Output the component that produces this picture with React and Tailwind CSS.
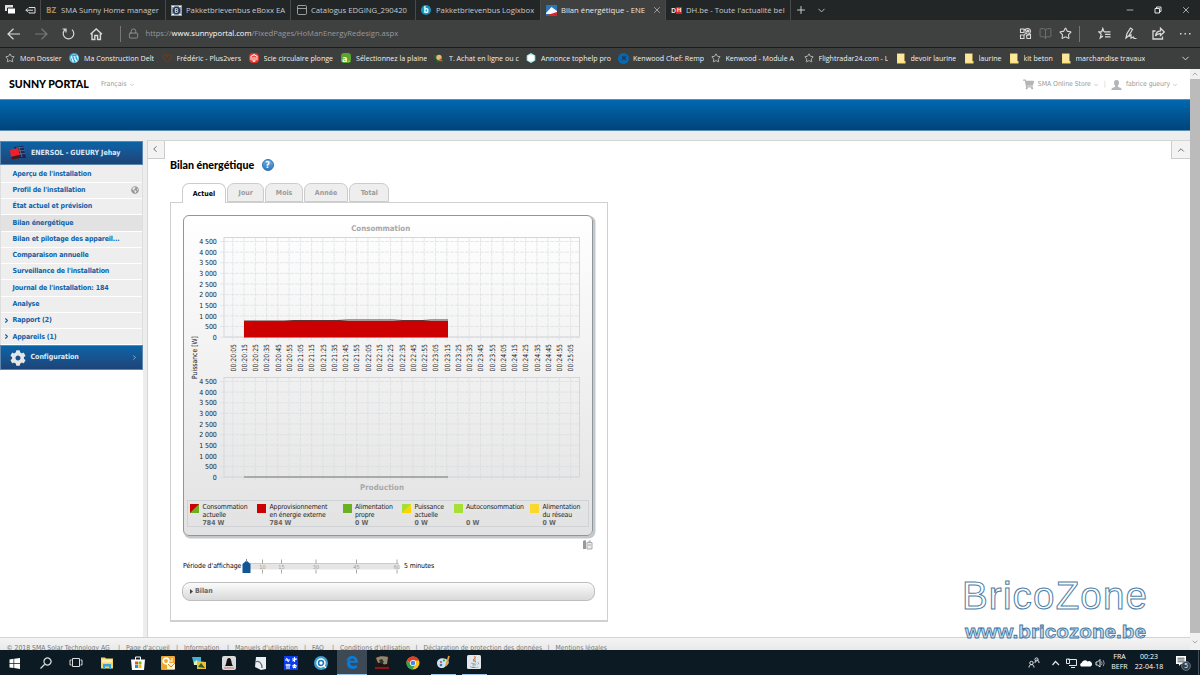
import {
  BookOpen,
  ChevronDown,
  ChevronLeft,
  ChevronRight,
  ChevronUp,
  Lock,
  Minus,
  PanelTop,
  Plus,
  Star,
  X,
} from "lucide-react";
import { FaWordpressSimple, FaMagento, FaShoppingCart, FaGlobeAmericas, FaJava, FaCog } from "react-icons/fa";

const uiFont = "font-['Open_Sans','Noto_Sans',sans-serif]";
const portalFont = "font-['DejaVu_Sans_Condensed','DejaVu_Sans',sans-serif]";

const browserTabs = [
  { icon: <span className="text-[8px] font-bold text-[#b08a55]">BZ</span>, title: "SMA Sunny Home manager", width: "w-[125px]" },
  { icon: <EboxxIcon />, title: "Pakketbrievenbus eBoxx EA", width: "w-[125px]" },
  { icon: <PanelTop size={12} strokeWidth={1.8} className="text-[#aaa]" />, title: "Catalogus EDGING_290420", width: "w-[125px]" },
  { icon: <span className="flex size-[10px] items-center justify-center rounded-full bg-[#1593bd] text-[8px] font-bold leading-none text-white">b</span>, title: "Pakketbrievenbus Logixbox", width: "w-[125px]" },
  { icon: <SmaIcon />, title: "Bilan énergétique - ENE", width: "w-[125px]", active: true },
  { icon: <DhIcon />, title: "DH.be - Toute l'actualité bel", width: "w-[125px]" },
];

const folder = (
  <svg width="10" height="11" viewBox="0 0 10 11">
    <path d="M1 .5h7.5v7.500H9.500v2.500H1z" fill="#fbd969" />
    <path d="M1.500 1h6.500v8.500H1.500z" fill="#ffe79a" />
  </svg>
);

const star = <Star size={10} strokeWidth={1.8} className="text-[#d8d8d8]" />;

const bookmarks = [
  { icon: star, title: "Mon Dossier", width: "w-[64px]" },
  { icon: <span className="flex size-[10px] items-center justify-center rounded-full bg-[#27a5d6]"><FaWordpressSimple size={9} className="text-white" /></span>, title: "Ma Construction Delt", width: "w-[92.5px]" },
  { icon: <svg width="10" height="10" viewBox="0 0 10 10" fill="none" stroke="#6b3a22" strokeWidth="1.2"><path d="M4 8C1 6 0 2 2.500 1.500S5 4 5 4s1-3 3.500-2S8 7 5.500 8.500" /></svg>, title: "Frédéric - Plus2vers", width: "w-[87px]" },
  { icon: <span className="flex size-[10px] items-center justify-center rounded-[4px] bg-[#e3382c]"><FaMagento size={8} className="text-white" /></span>, title: "Scie circulaire plonge", width: "w-[92.500px]" },
  { icon: <span className="flex size-[10px] items-center justify-center rounded-[3px] bg-[#5aa52b] text-[9px] font-bold leading-none text-white">a<i className="not-italic text-[#f3c136]">.</i></span>, title: "Sélectionnez la plaine", width: "w-[93px]" },
  { icon: <svg width="10" height="10" viewBox="0 0 10 10"><path d="M0 2h4v4H1zM2 7h7v2H3z" fill="#1d6a2b" /><circle cx="5" cy="4.500" r="2.700" fill="#e8b878" /><path d="M6 5l2.500 3H5z" fill="#c8632b" /></svg>, title: "T. Achat en ligne ou c", width: "w-[92px]" },
  { icon: <svg width="10" height="10" viewBox="0 0 10 10"><path d="M5 0l4.300 2.500v5L5 10 .7 7.500v-5z" fill="#a9ebe8" /><circle cx="5" cy="5" r="3.300" fill="#fff" /></svg>, title: "Annonce tophelp pro", width: "w-[92px]" },
  { icon: <span className="flex size-[11px] items-center justify-center rounded-full bg-[#0a66ad]"><X size={6} strokeWidth={5} className="text-[#22384c]" /></span>, title: "Kenwood Chef: Remp", width: "w-[92.500px]" },
  { icon: star, title: "Kenwood - Module A", width: "w-[93px]" },
  { icon: star, title: "Flightradar24.com - L", width: "w-[92px]" },
  { icon: folder, title: "devoir laurine", width: "w-[68px]" },
  { icon: folder, title: "laurine", width: "w-[45px]" },
  { icon: folder, title: "kit beton", width: "w-[52px]" },
  { icon: folder, title: "marchandise travaux", width: "w-[95px]" },
];

const menu = [
  { label: "Aperçu de l'installation" },
  { label: "Profil de l'installation", globe: true },
  { label: "État actuel et prévision" },
  { label: "Bilan énergétique", active: true },
  { label: "Bilan et pilotage des appareil..." },
  { label: "Comparaison annuelle" },
  { label: "Surveillance de l'installation" },
  { label: "Journal de l'installation: 184" },
  { label: "Analyse" },
  { label: "Rapport (2)", expandable: true },
  { label: "Appareils (1)", expandable: true },
];

const periodTabs = [
  { label: "Actuel", width: "w-[44px]", active: true },
  { label: "Jour", width: "w-[37px]" },
  { label: "Mois", width: "w-[37.500px]" },
  { label: "Année", width: "w-[44px]" },
  { label: "Total", width: "w-[40px]" },
];

const legend = [
  { lines: ["Consommation", "actuelle"], value: "784 W", a: "#cc0000", b: "#6ab023", width: "w-[67px]" },
  { lines: ["Approvisionnement", "en énergie externe"], value: "784 W", a: "#cc0000", b: "#cc0000", width: "w-[85.500px]" },
  { lines: ["Alimentation", "propre"], value: "0 W", a: "#6ab023", b: "#6ab023", width: "w-[59.500px]" },
  { lines: ["Puissance", "actuelle"], value: "0 W", a: "#a6e036", b: "#ffd500", width: "w-[51.500px]" },
  { lines: ["Autoconsommation", "\u00a0"], value: "0 W", a: "#a6e036", b: "#a6e036", width: "w-[76.500px]" },
  { lines: ["Alimentation", "du réseau"], value: "0 W", a: "#fdd82c", b: "#fdd82c", width: "w-[56px]" },
];

const footerLinks = [
  { label: "© 2018 SMA Solar Technology AG", width: "w-[111.500px]" },
  { label: "Page d'accueil", width: "w-[50px]" },
  { label: "Information", width: "w-[43px]" },
  { label: "Manuels d'utilisation", width: "w-[69px]" },
  { label: "FAQ", width: "w-[20px]" },
  { label: "Conditions d'utilisation", width: "w-[75.500px]" },
  { label: "Déclaration de protection des données", width: "w-[124px]" },
  { label: "Mentions légales", width: "w-[60px]" },
];

const levels = ["4 500", "4 000", "3 500", "3 000", "2 500", "2 000", "1 500", "1 000", "500", "0"];

const times = Array.from({ length: 31 }, (_, i) => {
  const seconds = 20 * 60 + 5 + i * 10;
  const pad = (n) => String(n).padStart(2, "0");
  return `00:${pad(Math.floor(seconds / 60))}:${pad(seconds % 60)}`;
});

function EboxxIcon() {
  return (
    <svg width="11" height="11" viewBox="0 0 11 11">
      <rect width="11" height="11" fill="#8fa0b4" />
      <path d="M1 1h2v1H1zM8 1h2v1H8zM1 9h2v1H1zM8 9h2v1H8z" fill="#fff" />
      <circle cx="5.500" cy="5.500" r="3.800" fill="#27384e" />
      <path d="M4.300 3.500v4h1.500a1 1 0 0 0 0-2 1 1 0 0 0 0-2zM4.300 5.500h1.500" fill="none" stroke="#dfe6ee" strokeWidth=".9" />
    </svg>
  );
}

function SmaIcon() {
  return (
    <svg width="11" height="11" viewBox="0 0 11 11">
      <rect width="11" height="11" fill="#2876b6" />
      <path d="M0 8L5.500 2 11 6v3H0z" fill="#f4f7fa" />
      <path d="M0 10.500L11 7v4H0z" fill="#d8232a" />
    </svg>
  );
}

function DhIcon() {
  return (
    <span className="flex h-[8px] w-[11px] items-center text-[7px] font-bold leading-none text-white">
      <span className="w-[5px] text-[#ddd]">D</span>
      <span className="flex h-[7px] w-[6px] items-center justify-center bg-[#d3222b] text-[6px]">H</span>
    </span>
  );
}

function TabBar() {
  return (
    <div className="flex h-[20px] shrink-0 bg-[#232627] text-[#c9c9c9]">
      <div className="flex w-[40px] items-center gap-[9px] pl-[5px]">
        <svg width="11" height="10" viewBox="0 0 11 10">
          <path d="M0 0h8v6H0z" fill="#ddd" />
          <path d="M2.500 3h8v6h-8z" fill="#fff" stroke="#232627" />
        </svg>
        <svg width="11" height="9" viewBox="0 0 11 9" fill="none" stroke="#ddd">
          <path d="M4 2V1.500h6v5.500H4V6M8 4.200H.8M2.800 2.400L1 4.200 2.800 6" />
        </svg>
      </div>
      {browserTabs.map((tab) => (
        <div
          key={tab.title}
          className={`flex shrink-0 items-center border-l border-[#4a4a4a] pr-[3px] pl-[5px] ${tab.width} ${tab.active ? "bg-[#3f4040] text-[#e8e8e8]" : ""}`}
        >
          <span className="flex w-[15px] shrink-0 items-center">{tab.icon}</span>
          <span className="min-w-0 flex-1 overflow-hidden whitespace-nowrap text-[7.700px] leading-[14px]">{tab.title}</span>
          {tab.active ? <X size={10} strokeWidth={1.600} className="ml-[2px] shrink-0 text-[#ccc]" /> : null}
        </div>
      ))}
      <div className="flex flex-1 items-center border-l border-[#4a4a4a] pl-[4px]">
        <Plus size={12} strokeWidth={2} />
        <ChevronDown size={11} strokeWidth={2} className="ml-[9px]" />
        <div className="ml-auto flex items-center gap-[19px] pr-[9px]">
          <Minus size={10} strokeWidth={2} />
          <svg width="8" height="8" viewBox="0 0 8 8" fill="none" stroke="#e5e5e5">
            <path d="M1 2.500h4.500V7H1zM2.500 2.500V1H7v4.500H5.500" />
          </svg>
          <X size={10} strokeWidth={2} />
        </div>
      </div>
    </div>
  );
}

function AddressBar() {
  return (
    <div className="flex h-[28px] shrink-0 items-center border-b border-[#1c1c1c] bg-[#3f4040] pl-[7px] text-[#d8d8d8]">
      <svg width="98" height="14" viewBox="0 0 98 14" fill="none" stroke="currentColor" strokeWidth="1.200">
        <path d="M1 7h12M6.500 1.800L1 7l5.500 5.200" />
        <path d="M28 7h12M34.500 1.800L40 7l-5.500 5.200" stroke="#777" />
        <path d="M58.500 2.200A5.300 5.300 0 1 0 65 2.600M55.500 2h3.500v3.500" />
        <path d="M83.500 7.200L89.200 2 95 7.200M85 6v6.500h2.800V8.500h2.800v4h2.800V6" strokeWidth="1.400" />
      </svg>
      <span className="ml-[15px] h-[16px] w-px bg-[#777]" />
      <Lock size={11} strokeWidth={1.800} className="ml-[7px] text-[#999]" />
      <span className="ml-[6.500px] text-[7.650px] text-[#9a9a9a]">
        https://<b className="font-normal text-white">www.sunnyportal.com</b>/FixedPages/HoManEnergyRedesign.aspx
      </span>
      <div className="ml-auto flex items-center pr-[8px]">
        <svg width="13" height="13" viewBox="0 0 13 13" fill="none" stroke="#d8d8d8" strokeWidth="1.100">
          <path d="M1.500 2h3.500v3.500H1.500zM1.500 8h3.500v3.500H1.500zM5 8.500L8 4M4.500 3.500L7 2" />
          <path d="M6.500 4.500c-1-4 5-4 5 0 0 1.500-1.500 2.500-2.500 3l-2-1M7.500 8.500l4-1v4H8z" />
          <circle cx="9" cy="4" r="1" fill="#d8d8d8" />
        </svg>
        <BookOpen size={13} strokeWidth={1.600} className="ml-[7px] text-[#757575]" />
        <Star size={13} strokeWidth={2} className="ml-[7px]" />
        <span className="ml-[7px] h-[16px] w-px bg-[#777]" />
        <svg className="ml-[18px]" width="13" height="13" viewBox="0 0 13 13" fill="none" stroke="currentColor" strokeWidth="1.200">
          <path d="M6 4.800L4.800 1.500 3.700 4.800H.7l2.500 2.300-1 4 2.800-2M6 4.800h6.500M7 7.300h5.500M7 9.800h5.500" />
        </svg>
        <svg className="ml-[14px]" width="12" height="13" viewBox="0 0 12 13" fill="none" stroke="currentColor" strokeWidth="1.200">
          <path d="M1 11L2 6.500 5.500 1l2 1.500-3.500 6L1 11zM4 9.500l2-1.500v3l2.500-1 .5 1.500h2.500" />
        </svg>
        <svg className="ml-[15px]" width="13" height="13" viewBox="0 0 13 13" fill="none" stroke="currentColor" strokeWidth="1.300">
          <path d="M3.500 4H1v8h9.500V9.500M8.500 1.200L12.300 5 8.500 8.500V6.500C6 6.500 4.500 7.500 3.500 9c.3-3 2-5 5-5.200z" />
        </svg>
        <svg className="ml-[14px]" width="13" height="3" viewBox="0 0 13 3" fill="currentColor">
          <path d="M1 1h1.500v1.500H1zM5.500 1H7v1.500H5.500zM10 1h1.500v1.500H10z" />
        </svg>
      </div>
    </div>
  );
}

function BookmarksBar() {
  return (
    <div className="flex h-[21px] shrink-0 items-center bg-[#3d3e3e] pb-px pl-[5px] text-[7.100px] text-[#f0f0f0]">
      {bookmarks.map((item) => (
        <div key={item.title} className={`flex shrink-0 items-center pr-[2px] ${item.width}`}>
          <span className="flex w-[15px] shrink-0">{item.icon}</span>
          <span className="overflow-hidden whitespace-nowrap leading-[14px]">{item.title}</span>
        </div>
      ))}
      <ChevronDown size={11} strokeWidth={1.800} className="mr-[9px] ml-auto" />
    </div>
  );
}

function PortalHeader() {
  return (
    <header className={`shrink-0 ${portalFont}`}>
      <div className="flex h-[30px] items-center bg-white pt-px text-[6.900px] text-[#999]">
        <span className="ml-[9px] w-[92px] font-['Lato',sans-serif] text-[10.600px] font-black whitespace-nowrap text-black">
          SUNNY PORTAL
        </span>
        <span>Français</span>
        <ChevronDown size={6} className="ml-[2px]" />
        <div className="ml-auto flex items-center pr-[12px]">
          <FaShoppingCart size={11} className="mr-[4px] text-[#b5b5b5]" />
          <span className="tracking-[-0.050px]">SMA Online Store</span>
          <ChevronDown size={6} className="ml-[2px]" />
          <span className="mx-[5px] text-[#ccc]">|</span>
          <svg className="mr-[4px]" width="11" height="10" viewBox="0 0 11 10" fill="#b5b5b5">
            <path d="M5.500 0C3.500 0 3 1.200 3 2.800c0 1.500.6 2.500 1.200 3.100L4 7 1 8 .3 10h10.400L10 8 7 7l-.2-1.100C7.400 5.300 8 4.300 8 2.800 8 1.200 7.500 0 5.500 0z" />
          </svg>
          <span className="tracking-[-0.080px]">fabrice gueury</span>
          <ChevronDown size={6} className="ml-[2px]" />
        </div>
      </div>
      <div className="h-[32px] border-y border-[#5b8eb5] bg-linear-to-b from-[#0068b0] to-[#00447a]" />
    </header>
  );
}

function Sidebar() {
  return (
    <aside className="w-[143px] shrink-0 bg-[#ededed] pt-px">
      <div className="flex h-[24px] items-center border border-[#5c86ad] bg-linear-to-b from-[#0764a8] to-[#1c4477] text-[7.100px] font-bold text-[#dce9f5]">
        <svg className="ml-[8px]" width="18" height="16" viewBox="0 0 18 16">
          <path d="M5 2l9-1 3 12H9z" fill="#1a2550" />
          <path d="M7 3l7-.5M8.500 6l7-.5M10 9l6-.5M10 2l3 10" stroke="#7080b0" strokeWidth=".7" />
          <path d="M1 5l8-2 2 7-9 2z" fill="#f02028" />
          <path d="M2 12l8-2v3.500l-7 1z" fill="#4a1821" />
        </svg>
        <span className="ml-[4px] tracking-[-0.080px] whitespace-nowrap">ENERSOL - GUEURY Jehay</span>
      </div>
      <ul className="border-x border-[#dedede] bg-[#eeeeee] pt-[1.500px]">
        {menu.map((item) => (
          <li
            key={item.label}
            className={`flex h-[16.270px] items-center border-b border-white pl-[3px] text-[7px] font-bold tracking-[-0.150px] text-[#0f62a8] ${item.active ? "bg-[#e2e2e2]" : ""}`}
          >
            <span className="w-[8.500px]">{item.expandable ? <ChevronRight size={7} strokeWidth={4} className="-ml-px" /> : null}</span>
            <span className="whitespace-nowrap">{item.label}</span>
            {item.globe ? <FaGlobeAmericas size={8} className="mr-[3px] ml-auto text-[#999]" /> : null}
          </li>
        ))}
      </ul>
      <div className="flex h-[24.500px] items-center border border-[#5c86ad] bg-linear-to-b from-[#0764a8] to-[#1c4477] text-[7.100px] font-bold text-[#dce9f5]">
        <FaCog size={16} className="ml-[9px] text-[#e6e6e6]" />
        <span className="ml-[4.500px] tracking-[-0.080px]">Configuration</span>
        <ChevronRight size={7} className="mr-[4px] ml-auto" />
      </div>
    </aside>
  );
}

function Plot({ top }) {
  return (
    <g>
      <g stroke="#d5dadd" strokeWidth=".8" strokeOpacity=".75" strokeDasharray="4 1">
        {levels.map((level, i) => (
          <path key={level} d={`M220 ${top + 4 + i * 10.630}H579.500`} />
        ))}
        {times.map((time, i) => (
          <path key={time} d={`M${232.800 + i * 11.260} ${top}v103`} />
        ))}
      </g>
      <rect x="224" y={top} width="355.500" height="99.500" fill="none" stroke="#d3d7da" />
      <g fontSize="7" textAnchor="end" fill="#222" letterSpacing="-.12">
        {levels.map((level, i) => (
          <text key={level} x="216.700" y={top + 6.700 + i * 10.630}>
            {level}
          </text>
        ))}
      </g>
    </g>
  );
}

function EnergyChart() {
  return (
    <svg className="block" width="408" height="284" viewBox="184 216 408 284">
      <Plot top={237.500} />
      <Plot top={377.500} />
      <path d="M244 321H448V337.500H244z" fill="#cc0000" />
      <path d="M244 321h40l10-.5h12l30 .2 12-.7h45l10 .5 20 0 8-.5h17" fill="none" stroke="#6b3434" strokeWidth="1.200" />
      <path d="M244 477H448" stroke="#999" strokeWidth="1.500" />
      <g fontSize="7.200" fill="#222">
        {times.map((time, i) => (
          <text key={time} transform={`translate(${235.600 + i * 11.260} 371.500) rotate(-90)`} textLength="27.500" lengthAdjust="spacingAndGlyphs">
            {time}
          </text>
        ))}
        <text transform="translate(196.500 379) rotate(-90)" textLength="43" lengthAdjust="spacingAndGlyphs">
          Puissance [W]
        </text>
      </g>
      <g fontSize="7.800" fontWeight="bold" fill="#a8a8a8" textAnchor="middle">
        <text x="380.700" y="231.300" textLength="59">Consommation</text>
        <text x="382" y="489.500" textLength="44">Production</text>
      </g>
    </svg>
  );
}

function Legend() {
  return (
    <div className="mx-[3px] flex h-[27px] border border-[#d0d3d6] pt-[2px] pl-[2px] text-[6.900px] leading-[8px] tracking-[-0.150px] text-[#222]">
      {legend.map((item) => (
        <div key={item.lines.join()} className={`flex shrink-0 ${item.width}`}>
          <svg className="mt-[1px] shrink-0" width="9" height="9" viewBox="0 0 9 9">
            <path d="M0 0h9v9H0z" fill={item.a} />
            <path d="M9 0v9H0z" fill={item.b} />
          </svg>
          <div className="ml-[3.500px] whitespace-nowrap">
            {item.lines.map((line) => (
              <p key={line}>{line}</p>
            ))}
            <p className="font-bold tracking-normal text-[#666]">{item.value}</p>
          </div>
        </div>
      ))}
    </div>
  );
}

function PeriodSlider() {
  const ticks = [
    [20.500, "10"],
    [39.500, "15"],
    [74, "30"],
    [114.500, "45"],
    [155, "60"],
  ];

  return (
    <div className="mt-[9px] flex h-[15px] items-center text-[6.900px] text-black">
      <span className="w-[59px] tracking-[-0.060px] whitespace-nowrap">Période d'affichage</span>
      <svg className="shrink-0" width="162" height="15" viewBox="0 0 162 15">
        <path d="M5 4.500h152v6H5z" fill="#e5e5e5" />
        <path d="M5 4.500h152" stroke="#ccc" />
        {ticks.map(([x, label]) => (
          <g key={label}>
            <path d={`M${x} .5v4.500M${x} 10.500v4`} stroke="#aaa" />
            <text x={x} y="10" textAnchor="middle" fontSize="5.500" fill="#999">
              {label}
            </text>
          </g>
        ))}
        <path d="M.5 5l4-3.500 4 3.500v9h-8z" fill="#125795" />
        <path d="M4.500 0v3" stroke="#888" />
      </svg>
      <span className="tracking-[-0.100px]">5 minutes</span>
    </div>
  );
}

function MainPanel() {
  return (
    <main className="ml-[4px] flex min-w-0 flex-1 border-t border-l border-[#d5d5d5] bg-white">
      <div className="w-[22px] shrink-0">
        <div className="flex h-[18px] w-[17px] items-center justify-center border-r border-b border-[#ccc] bg-[#f3f3f3] pr-[2px] pb-px">
          <ChevronLeft size={10} className="text-[#555]" />
        </div>
      </div>
      <div className="w-[438px] shrink-0">
        <div className="mt-[16px] flex h-[16px] items-center">
          <h1 className="w-[91.500px] font-['Lato',sans-serif] text-[10.700px] font-black whitespace-nowrap text-black">
            Bilan énergétique
          </h1>
          <span className="flex size-[12px] items-center justify-center rounded-full border border-[#2b6fae] bg-linear-to-b from-[#73b0e4] to-[#2b78be] text-[9px] font-bold leading-none text-white">
            ?
          </span>
        </div>
        <div className="mt-[10px] flex h-[19px] items-end gap-[1.200px] pl-[12px]">
          {periodTabs.map((tab) => (
            <div
              key={tab.label}
              className={`flex items-center justify-center rounded-t-[7px] border border-[#ccc] pt-[2px] text-[7px] font-bold ${tab.width} ${tab.active ? "relative -mb-px h-[20px] border-b-0 bg-white pb-px text-black" : "h-[19px] bg-[#eeeeee] text-[#9b9b9b]"}`}
            >
              {tab.label}
            </div>
          ))}
        </div>
        <section className="h-[420px] border border-b-2 border-[#d0d0d0] bg-white pt-[12px] pr-[12px] pl-[12px]">
          <div className="h-[321px] w-[410px] rounded-[6px] border border-[#8e979e] bg-linear-to-b from-white to-[#e2e2e2] shadow-[1.500px_1.500px_0_1px_#c4c8cb]">
            <EnergyChart />
            <Legend />
          </div>
          <div className="mt-[4px] flex h-[10px] justify-end pr-[2px]">
            <svg width="10" height="10" viewBox="0 0 10 10">
              <path d="M0 1l2-1 1 1v8H0z" fill="#999" />
              <path d="M4 2.500h5V9H4zM6 2.500V1h2M5 5h3" fill="#eee" stroke="#aaa" />
            </svg>
          </div>
          <PeriodSlider />
          <div className="-ml-[1px] mt-[8px] flex h-[19px] w-[413px] items-center rounded-[8px] border border-[#bebebe] bg-linear-to-b from-[#fbfbfb] to-[#d9d9d9] pl-[7px] text-[7px] font-bold text-[#666]">
            <svg className="mr-[2px]" width="3" height="5" viewBox="0 0 3 5">
              <path d="M0 0l3 2.500L0 5z" fill="#444" />
            </svg>
            Bilan
          </div>
        </section>
      </div>
      <div className="ml-auto flex h-[18px] w-[19px] items-center justify-center border-b border-l border-[#ccc] bg-[#f3f3f3]">
        <ChevronUp size={10} className="text-[#555]" />
      </div>
    </main>
  );
}

function Footer() {
  return (
    <footer className="flex h-[13px] shrink-0 overflow-hidden border-t border-[#d3d3d3] bg-linear-to-b from-[#f4f4f4] to-[#e9e9e9] pt-[6px] pl-[6.500px] text-[6.800px] leading-[9px] text-[#777]">
      {footerLinks.map((link, i) => (
        <span key={link.label} className="flex shrink-0 whitespace-nowrap">
          {i > 0 ? <span className="w-[8px]">|</span> : null}
          <span className={link.width}>{link.label}</span>
        </span>
      ))}
    </footer>
  );
}

function Scrollbar() {
  return (
    <div className="flex w-[10px] shrink-0 flex-col bg-[#f0f0f0] text-[#888]">
      <div className="flex h-[10px] items-center justify-center">
        <ChevronUp size={8} />
      </div>
      <div className="h-[554px] bg-[#bbbbbb]" />
      <div className="flex flex-1 items-center justify-center">
        <ChevronDown size={8} />
      </div>
    </div>
  );
}

function Watermark() {
  return (
    <svg className="absolute top-[574px] left-[960px] font-['Liberation_Sans',Arial,sans-serif]" width="192" height="70" viewBox="0 0 192 70">
      <text x="2" y="35" fontSize="38.500" fill="#fff" stroke="#4c7ea6" strokeWidth="1" textLength="185">
        BricoZone
      </text>
      <text x="5" y="63.500" fontSize="19" fontWeight="bold" fill="#c9dae7" stroke="#3c76a4" strokeWidth=".8" textLength="181" lengthAdjust="spacingAndGlyphs">
        www.bricozone.be
      </text>
    </svg>
  );
}

const taskbarApps = [
  {
    name: "start",
    art: <path d="M1.500 3.400l4-.6v4.200h-4zM6.200 2.700L12 1.900V7H6.200zM1.500 7.700h4V12l-4-.6zM6.200 7.700H12v5.200l-5.800-.8z" fill="#fff" />,
  },
  {
    name: "search",
    art: <path d="M5.500 8.500L1.500 12.500M6 8A3.500 3.500 0 1 0 6 3a3.500 3.500 0 0 0 0 5z" fill="none" stroke="#ddd" strokeWidth="1.200" />,
  },
  {
    name: "tasks",
    art: <path d="M3.500 2.500h7v8h-7zM2.500 4H1v5h1.500M11.500 4H13v5h-1.500" fill="none" stroke="#ddd" />,
  },
  {
    name: "explorer",
    art: (
      <>
        <path d="M1 1.500h4l1 1h7v10H1z" fill="#f8d568" />
        <path d="M2 3.500h10v3H2z" fill="#fff0b0" />
        <path d="M3 8h8v5H9v-2.500H5V13H3z" fill="#39a5dc" />
      </>
    ),
  },
  {
    name: "store",
    art: (
      <>
        <path d="M0 3.500h14L13 14H1z" fill="#fff" />
        <path d="M4.500 4V1h5v3" fill="none" stroke="#fff" />
        <path d="M4 5.500h3v3H4z" fill="#f25022" />
        <path d="M7.500 5.500h3v3h-3z" fill="#7fba00" />
        <path d="M4 9h3v3H4z" fill="#00a4ef" />
        <path d="M7.500 9h3v3h-3z" fill="#ffb900" />
      </>
    ),
  },
  {
    name: "outlook",
    art: (
      <>
        <rect width="14" height="14" rx="1" fill="#f0a72d" />
        <path d="M6 7h8v6H6z" fill="#fff3cf" />
        <path d="M6 7l4 4 4-4" fill="none" stroke="#d9891a" />
        <circle cx="5" cy="5" r="2.800" fill="none" stroke="#fff" strokeWidth="1.700" />
        <path d="M9 5h3M10 3h2" stroke="#fff" />
      </>
    ),
  },
  {
    name: "photos",
    art: (
      <>
        <path d="M0 1h9v8H2z" fill="#3fb3d8" />
        <path d="M2 6l3-2 3 5H2z" fill="#d9edbf" />
        <path d="M5 5l9 1v7H5z" fill="#eebd3a" />
        <path d="M6 11l3-4 4 5z" fill="#27602c" />
      </>
    ),
  },
  {
    name: "bell",
    art: (
      <>
        <rect width="14" height="14" rx="2" fill="#dadada" />
        <path d="M3 10c2-2 1-8 4-8s2 6 4 8z" fill="#111" />
        <path d="M2 12h10" stroke="#c97468" />
      </>
    ),
  },
  {
    name: "reader",
    art: (
      <>
        <path d="M3 1h10v12l-5 1-6-3z" fill="#eceff2" />
        <path d="M2 6c4-2 7 1 7 6" fill="none" stroke="#5e7286" strokeWidth="1.300" />
      </>
    ),
  },
  {
    name: "controls",
    art: (
      <>
        <rect width="14" height="14" fill="#0a3df0" />
        <path d="M1 4h5M2.500 2l2 4M8 3h5M8.500 5l4-2M10.500 1v5M3 8v5M5 8v5M1.500 9l5 0M8 10h5M10.500 8v4M9 12l3-3M9 9l3 3" stroke="#fff" strokeWidth="1.100" />
      </>
    ),
  },
  {
    name: "search-q",
    art: (
      <>
        <circle cx="7" cy="7" r="7" fill="#3c9cd3" />
        <circle cx="7" cy="7" r="4" fill="#1c74ae" stroke="#fff" strokeWidth="1.500" />
        <circle cx="7" cy="7" r="1.700" fill="#fff" />
        <path d="M9 9l3 3" stroke="#fff" strokeWidth="1.300" />
      </>
    ),
  },
  {
    name: "edge",
    state: "active",
    art: <path d="M1 6.500C2 2.500 4.500 1 7.300 1c3.800 0 5.700 3 5.700 6.800H5c.2 3.500 4.500 3.800 7 2.200v2.800c-4 2.200-10 1.200-10-4.300 0-2 1.200-3.500 3-4.300C3 4.600 1.800 5.500 1 6.500zM5.200 5.800h4.300c0-3.200-4-3.200-4.300 0z" fill="#0b7bd8" />,
  },
  {
    name: "game",
    art: (
      <>
        <rect width="14" height="14" fill="#241713" />
        <path d="M1 2c3-2 8-2 12-1l-1 7-3 1-2-3-4 1z" fill="#8d8775" />
        <path d="M4 4l3-1 2 3-3 2z" fill="#3a2f27" />
        <path d="M0 11h14v2H0z" fill="#8d1714" />
        <path d="M5 9h7" stroke="#111" />
      </>
    ),
  },
  {
    name: "chrome",
    art: (
      <>
        <circle cx="7" cy="7" r="6.500" fill="#fbc116" />
        <path d="M1.200 4A6.500 6.500 0 0 1 13 4.500H7L5 8z" fill="#e33b2e" />
        <path d="M1.200 4A6.500 6.500 0 0 0 6.500 13.500L9.500 8.500 5 9z" fill="#32a350" />
        <circle cx="7" cy="7" r="3" fill="#fff" />
        <circle cx="7" cy="7" r="2.300" fill="#4285f4" />
      </>
    ),
  },
  {
    name: "paint",
    state: "open",
    art: (
      <>
        <path d="M0 8c0-4 5-6 9-4s3 5 1 6-2 3-5 3-5-2-5-5z" fill="#c9e3f2" />
        <circle cx="4" cy="7" r="1.100" fill="#d64d39" />
        <circle cx="7" cy="5.500" r="1.100" fill="#4b9f46" />
        <circle cx="4" cy="10" r="1.300" fill="#3478bd" />
        <path d="M9 11l3-10" stroke="#e49c35" strokeWidth="1.800" />
      </>
    ),
  },
  {
    name: "java",
    state: "open",
    art: (
      <>
        <rect width="14" height="14" rx="1.500" fill="#e4e8ec" />
        <FaJava x="1.500" y="1" size={12} color="#4a7896" />
        <path d="M7 1c3 2-2 3 .5 5.500" fill="none" stroke="#e07a2d" />
      </>
    ),
  },
];

function Taskbar() {
  return (
    <div className={`flex h-[25px] shrink-0 bg-[#0c1a24] text-white ${uiFont}`}>
      {taskbarApps.map((app) => (
        <div
          key={app.name}
          className={`flex h-full w-[30.600px] shrink-0 items-center justify-center ${app.state === "active" ? "bg-[#3d4a55]" : ""}`}
        >
          <div className={`flex h-full items-center justify-center ${app.state === "active" ? "w-full border-b border-[#9cc3ea]" : app.state === "open" ? "w-[25px] border-b border-[#9cc3ea]" : ""}`}>
            <svg width="14" height="14" viewBox="0 0 14 14">
              {app.art}
            </svg>
          </div>
        </div>
      ))}
      <div className="ml-auto flex items-center text-center text-[7px] leading-[10.500px]">
        <svg width="78" height="14" viewBox="0 0 78 14" fill="none" stroke="#e5e5e5">
          <path d="M1 11.500c0-4 5-4 5 0M7 7c0-4 4-4 4 0" />
          <circle cx="3.500" cy="7" r="1.700" />
          <circle cx="8.500" cy="3.500" r="1.600" />
          <path d="M24.500 9l3-3.500 3.500 3.500" strokeWidth="1.200" />
          <path d="M40 3.500h8.500v6H41M43 11.500h4M38.500 3v4.500h3V3z" />
          <path d="M53 10.500a2 2 0 0 1 .5-3.500 3.500 3.500 0 0 1 6-1.500A2.700 2.700 0 0 1 62.500 10.500z" fill="#fff" stroke="none" />
          <path d="M68 6h1.500L72 3.500v7.500L69.500 9H68z" />
          <path d="M73.500 5.500q1.200 1.700 0 3.500M75.200 4.200q2 3 0 6" stroke="#999" />
        </svg>
        <div className="ml-[5px] w-[17px] pb-px">
          <p>FRA</p>
          <p>BEFR</p>
        </div>
        <div className="ml-[3px] w-[36px] pb-px whitespace-nowrap">
          <p>00:23</p>
          <p>22-04-18</p>
        </div>
        <svg className="ml-[8px] mr-[6px]" width="17" height="16" viewBox="0 0 17 16">
          <path d="M1 1h10v8H6l-2 2V9H1z" fill="#fff" />
          <path d="M2.500 3.200h7M2.500 5h7M2.500 6.800h7" stroke="#0c1a24" strokeWidth=".7" />
          <circle cx="11" cy="11" r="4.500" fill="#34424d" stroke="#8c969d" strokeWidth=".6" />
          <text x="11" y="13.300" fontSize="6.500" textAnchor="middle" fill="#fff">5</text>
        </svg>
        <span className="mr-[1px] h-[25px] w-px bg-[#45515a]" />
      </div>
    </div>
  );
}

export default function App() {
  return (
    <div className={`relative flex h-[675px] w-[1200px] flex-col overflow-hidden ${uiFont}`}>
      <TabBar />
      <AddressBar />
      <BookmarksBar />
      <div className="flex min-h-0 flex-1">
        <div className={`flex min-w-0 flex-1 flex-col bg-[#ededed] ${portalFont}`}>
          <PortalHeader />
          <div className="flex min-h-0 flex-1 pt-[9px]">
            <div className="flex flex-col bg-white">
              <Sidebar />
            </div>
            <MainPanel />
          </div>
          <Footer />
        </div>
        <Scrollbar />
      </div>
      <Taskbar />
      <Watermark />
    </div>
  );
}
